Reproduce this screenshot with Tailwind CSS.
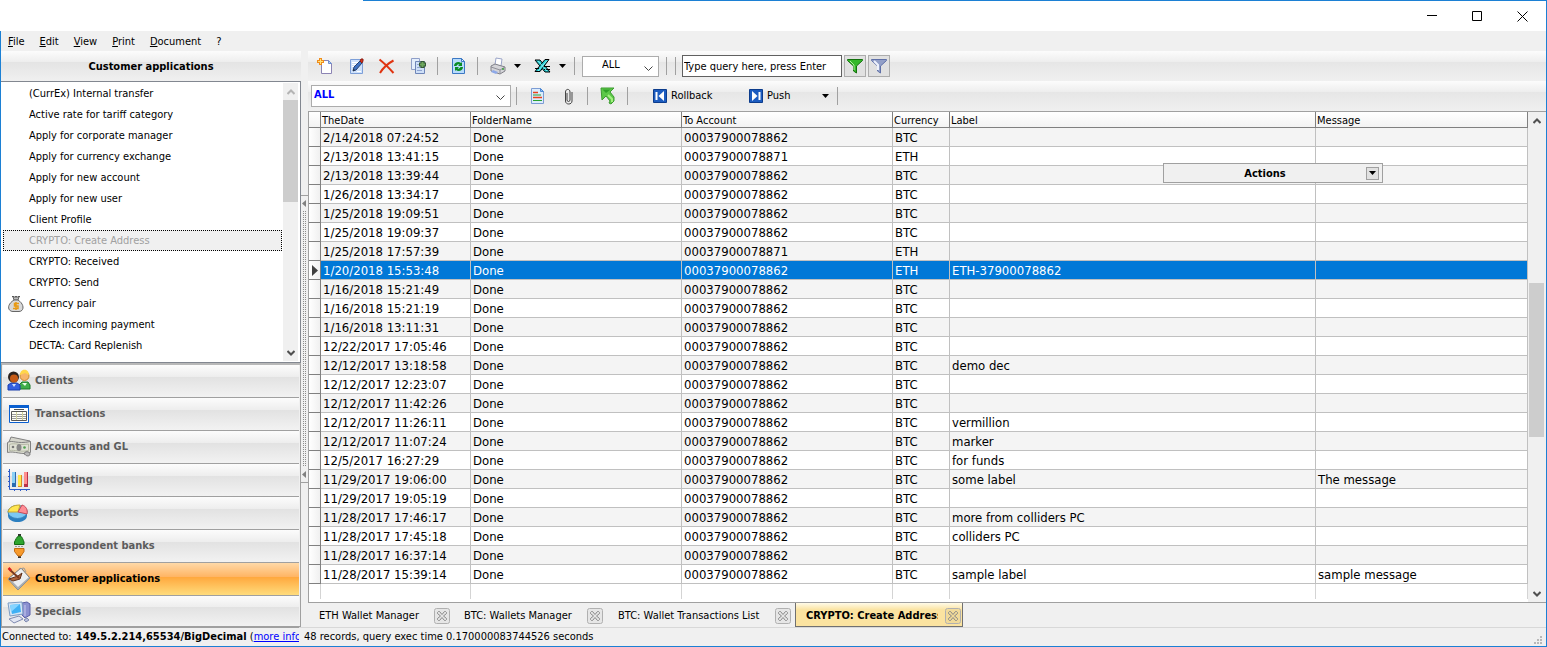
<!DOCTYPE html>
<html lang="en">
<head>
  <meta charset="UTF-8">
  <meta name="viewport" content="width=device-width, initial-scale=1.0">
  <title>Customer applications</title>
  <script src="https://cdn.jsdelivr.net/npm/@tailwindcss/browser@4"></script>
</head>
<body class="bg-white text-black text-[11px] leading-4 font-['DejaVu_Sans_Condensed','Noto_Sans',sans-serif]">
<div class="h-screen flex flex-col border-r border-b border-[#1c80d4] overflow-hidden">

  <!-- title bar -->
  <header class="flex h-[31px] shrink-0">
    <div class="w-[363px]"></div>
    <div class="flex-1 flex justify-end border-t border-[#1c80d4]">
      <button aria-label="Minimize" class="w-[46px] grid place-items-center"><svg width="10" height="10" stroke="#000" fill="none"><path d="M0 4.5h10"/></svg></button>
      <button aria-label="Maximize" class="w-11 grid place-items-center"><svg width="10" height="10" stroke="#000" fill="none"><path d="M.5.5h9v9h-9z"/></svg></button>
      <button aria-label="Close" class="w-[47px] grid place-items-center"><svg width="11" height="11" stroke="#000" fill="none"><path d="M.5.5l10 10M10.5.5l-10 10"/></svg></button>
    </div>
  </header>

  <div class="flex-1 min-h-0 flex flex-col border-l border-[#1c80d4] bg-[#f0f0f0]">
    <nav class="flex h-5 shrink-0 items-center gap-[15px] pl-[7px] pt-[2px]">
      <button><u>F</u>ile</button>
      <button><u>E</u>dit</button>
      <button><u>V</u>iew</button>
      <button><u>P</u>rint</button>
      <button><u>D</u>ocument</button>
      <button>?</button>
    </nav>

    <div class="flex-1 min-h-0 flex">
      <!-- left panel -->
      <aside class="w-[300px] shrink-0 flex flex-col">
        <h1 class="h-[30px] shrink-0 flex items-center justify-center pt-[2px] font-bold bg-[linear-gradient(#fcfcfc,#ededed_38%,#e4e4e4_38%,#f0f0f0)]">Customer applications</h1>
        <div class="flex-1 min-h-0 flex border border-l-0 border-[#828790] bg-white p-px">
          <ul id="appList" class="flex-1 overflow-hidden"></ul>
          <div class="w-[15px] mr-px flex flex-col bg-[#f0f0f0]">
            <button aria-label="Scroll up" class="h-[17px] grid place-items-center"><svg width="8" height="6" fill="none" stroke="#b4b4b4" stroke-width="2"><path d="M.5 5L4 1.5 7.5 5"/></svg></button>
            <div class="h-[102px] bg-[#cdcdcd]"></div>
            <button aria-label="Scroll down" class="mt-auto h-[17px] grid place-items-center"><svg width="8" height="6" fill="none" stroke="#505050" stroke-width="2"><path d="M.5 1L4 4.500 7.500 1"/></svg></button>
          </div>
        </div>
        <div id="sections" class="shrink-0 flex flex-col border border-t-2 border-[#a0a0a0] border-t-[#b8b8b8] px-px">
          <button class="h-[33px] flex items-center gap-1 pl-1 font-bold text-[#5c5c5c] border-b border-[#a0a0a0] bg-[linear-gradient(#fcfcfc,#ededed_38%,#e2e2e2_38%,#f2f2f2)]">
            <svg width="24" height="24" viewBox="0 0 24 24"><path d="M12 20v-4l3-3h6l2 3v4z" fill="#3fae49" stroke="#1c7a2a"/><path d="M15 14l3 3 2-3z" fill="#e8ffe8"/><circle cx="17.500" cy="7" r="4.500" fill="#f6b56a" stroke="#c98a30"/><path d="M13 6c0-7 9-7 9 0l-4-2z" fill="#ffd64a"/><path d="M1 21v-5l3-2h6l3 2v5z" fill="#3560e0" stroke="#1b3fae"/><path d="M5 15l2 3 2-3z" fill="#cfe0ff"/><circle cx="6.500" cy="8" r="5.500" fill="#2c2320"/><ellipse cx="7" cy="9.500" rx="4" ry="4" fill="#c65a16"/></svg>Clients</button>
          <button class="h-[33px] flex items-center gap-1 pl-1 font-bold text-[#5c5c5c] border-b border-[#a0a0a0] bg-[linear-gradient(#fcfcfc,#ededed_38%,#e2e2e2_38%,#f2f2f2)]">
            <svg width="24" height="24" viewBox="0 0 24 24"><path d="M2.500 3.500h19v17h-19z" fill="#fff" stroke="#0a5fd0"/><path d="M2 3h20v3H2z" fill="#0a5fd0"/><path d="M7 7.500h10" stroke="#555"/><path d="M4.500 9.500h15v9h-15z" fill="#fffff4" stroke="#555"/><path d="M5 12.500h14M5 14.500h14M5 16.500h14" stroke="#999"/><path d="M9.500 10v8M15.500 10v8" stroke="#d0d09a"/></svg>Transactions</button>
          <button class="h-[33px] flex items-center gap-1 pl-1 font-bold text-[#5c5c5c] border-b border-[#a0a0a0] bg-[linear-gradient(#fcfcfc,#ededed_38%,#e2e2e2_38%,#f2f2f2)]">
            <svg width="24" height="24" viewBox="0 0 24 24"><path d="M2 7l2-5 19 4v5z" fill="#d5d5cc" stroke="#808080"/><path d="M.500 7.500c5-3 9 2 23-1v11c-9 3-16-2-23 0z" fill="#dfe0d4" stroke="#808080"/><path d="M2.500 9.500c5-2 9 1 19-.500v6.500c-8 2-14-1-19 0z" fill="none" stroke="#b4b8a4"/><ellipse cx="12" cy="12.500" rx="2.500" ry="3.500" fill="#888"/><circle cx="6" cy="12" r="1.300" fill="#777"/><circle cx="17.500" cy="12.500" r="1.300" fill="#4fa04f"/><path d="M17 19c0-3 6-3 6 0s-5 2-5 0z" fill="#bbb" stroke="#777"/></svg>Accounts and GL</button>
          <button class="h-[33px] flex items-center gap-1 pl-1 font-bold text-[#5c5c5c] border-b border-[#a0a0a0] bg-[linear-gradient(#fcfcfc,#ededed_38%,#e2e2e2_38%,#f2f2f2)]">
            <svg width="24" height="24" viewBox="0 0 24 24"><path d="M2.500 1v20.500H23" stroke="#2d5cc8" fill="none"/><path d="M1 3.500h1M1 8.500h1M1 13.500h1M1 18.500h1M7.500 22v1M13.500 22v1M19.500 22v1" stroke="#2d5cc8"/><path d="M5 4h4v15H5z" fill="#8cd0f4"/><path d="M8 4h1v15H5v-4h3z" fill="#2a6bb0"/><path d="M11 7h4v12h-4z" fill="#ffe84a"/><path d="M14 7h1v12h-4v-1h3z" fill="#d88a2a"/><path d="M17 4h4v15h-4z" fill="#ff8f8f"/><path d="M20 4h1v15h-4v-3h3z" fill="#b8324a"/></svg>Budgeting</button>
          <button class="h-[33px] flex items-center gap-1 pl-1 font-bold text-[#5c5c5c] border-b border-[#a0a0a0] bg-[linear-gradient(#fcfcfc,#ededed_38%,#e2e2e2_38%,#f2f2f2)]">
            <svg width="24" height="24" viewBox="0 0 24 24"><path d="M1 11v4c1 8 18 8 19 0v-4z" fill="#2c7fc0"/><ellipse cx="10.500" cy="11" rx="9.500" ry="6.500" fill="#7cc8f4" stroke="#3b86bd"/><path d="M11 11L1 11C2 6 7 4 13 4z" fill="#ffe650" stroke="#c8a830"/><path d="M11 11l4-7c4 1 6 5 5 9z" fill="#ff8c94" stroke="#c24a58"/></svg>Reports</button>
          <button class="h-[33px] flex items-center gap-1 pl-1 font-bold text-[#5c5c5c] border-b border-[#a0a0a0] bg-[linear-gradient(#fcfcfc,#ededed_38%,#e2e2e2_38%,#f2f2f2)]">
            <svg width="24" height="24" viewBox="0 0 24 24"><path d="M11 0h3v3h-3zM11 21h3v3h-3z" fill="#333"/><path d="M7.500 10.500V8c1-2 2-5 4-6h2c2 1 2.500 4 3.500 6v2.500z" fill="#2fa52f" stroke="#126a12"/><path d="M8 12.500h9" stroke="#999" stroke-dasharray="2 1"/><path d="M7.500 14.500h9.500v3l-3 4.500h-3l-3.500-4.500z" fill="#f79a2c" stroke="#c26a10"/></svg>Correspondent banks</button>
          <button class="h-[33px] flex items-center gap-1 pl-1 font-bold text-black border-b border-[#a0a0a0] bg-[linear-gradient(#ffd9a8,#ffb564_43%,#ffa73c_43%,#ffdc7c)]">
            <svg width="24" height="24" viewBox="0 0 24 24"><path d="M1 12L14 1l9 10-12 12z" fill="#eceef0" stroke="#707478"/><path d="M1 12l10 11 12-12-1-1-11 10L2 11z" fill="#a8adb2"/><path d="M2 12l9-3 4-3-2 6-7 2z" fill="#b0643c" stroke="#60301a"/><path d="M3 3l9 8" stroke="#7a3a20" stroke-width="2"/><path d="M1.500 1l2.500 2.500" stroke="#d82020" stroke-width="2.500"/><path d="M12 2l5-1 2 4" fill="none" stroke="#999"/></svg>Customer applications</button>
          <button class="h-[30px] flex items-center gap-1 pl-1 pt-[2px] font-bold text-[#5c5c5c] bg-[linear-gradient(#fcfcfc,#ededed_38%,#e2e2e2_38%,#f2f2f2)]">
            <svg width="24" height="24" viewBox="0 0 24 24"><path d="M15 3l5-1 3 2v11l-5 3-3-3z" fill="#8b90d0" stroke="#5b60a8"/><path d="M18 5v11" stroke="#c8ccf0"/><path d="M1 3l14-1 1 12-13 2z" fill="#d7e6f6" stroke="#7b9cc4"/><path d="M3 5l10-1 1 8-9 2z" fill="#3fb0f4"/><path d="M3 5l10-1-9 8z" fill="#86d4ff"/><path d="M2 19l10-3 4 3-9 4z" fill="#e2e6f2" stroke="#7f8ab0"/><path d="M17 20l3-2 2 2-3 2z" fill="#b8c0dc" stroke="#7f8ab0"/></svg>Specials</button>
        </div>
      </aside>

      <!-- splitter -->
      <div class="w-[7px] shrink-0 flex flex-col items-center justify-center">
        <div class="w-full h-[288px] flex flex-col border-y border-[#a0a0a0]">
          <svg class="my-1" width="6" height="7"><path d="M5 0v7L1 3.500z" fill="#808080"/></svg>
          <svg class="flex-1 mx-auto" width="4"><defs><pattern id="dots" width="2" height="2" patternUnits="userSpaceOnUse"><path d="M0 0h1v1H0z" fill="#8c8c8c"/></pattern></defs><rect width="4" height="100%" fill="url(#dots)"/></svg>
          <svg class="my-1" width="6" height="7"><path d="M5 0v7L1 3.500z" fill="#808080"/></svg>
        </div>
      </div>

      <!-- right side -->
      <main class="flex-1 min-w-0 flex flex-col">
        <div class="h-[30px] shrink-0 flex items-center pl-2 bg-[linear-gradient(#fcfcfc,#ededed_38%,#e6e6e6_38%,#f0f0f0)]">
          <button aria-label="New" class="w-8"><svg width="18" height="18" viewBox="0 0 18 18"><path d="M5.500 3.500h7l3 3v10h-10z" fill="#fff" stroke="#8c84b4"/><path d="M12.500 3.500v3h3z" fill="#b8d4f8" stroke="#6f8fd0"/><path d="M4.500 1v7M1 4.500h7" stroke="#f08c1c" stroke-width="3"/><path d="M4.500 2v5M2 4.500h5" stroke="#ffe37a"/></svg></button>
          <button aria-label="Edit" class="w-[30px]"><svg width="18" height="18" viewBox="0 0 18 18"><path d="M2.500 2.500h12v14h-12z" fill="#cfe2fb" stroke="#7d9fd8"/><path d="M4 5.500h6M4 7.500h5M4 9.500h4M9 14.500h4" stroke="#fff"/><path d="M5 14l1-4 6-6 2 2-6 7z" fill="#3f74c4" stroke="#27406e"/><path d="M12 4l1-2 2 0 0 2-1 2z" fill="#d8301c" stroke="#8c1c10"/><path d="M5 14l.500-2 1.500 1z" fill="#222"/></svg></button>
          <button aria-label="Delete" class="w-8"><svg width="18" height="18" viewBox="0 0 18 18"><path d="M1.500 2.500C6 6 11 11 15.500 16M15.500 3.500C9 7 5 11 2 16" fill="none" stroke="#e03410" stroke-width="2"/></svg></button>
          <button aria-label="Copy" class="w-6"><svg width="18" height="18" viewBox="0 0 18 18"><path d="M1.500 1.500h8v11h-8z" fill="#e4eefc" stroke="#8f9fc8"/><path d="M5.500 4.500h9v12h-9z" fill="#cfe0f8" stroke="#6f86b8"/><path d="M7 7.500h3M7 10.500h5M7 13.500h5" stroke="#8fa4d0"/><path d="M12.500 4v7M9 7.500h7" stroke="#345834" stroke-width="4"/><path d="M12.500 5v5M10 7.500h5" stroke="#6fa85f" stroke-width="2"/></svg></button>
          <i class="w-px h-[18px] bg-[#a0a0a0] ml-[3px] mr-[13px]"></i>
          <button aria-label="Refresh" class="w-[22px]"><svg width="16" height="18" viewBox="0 0 16 18"><path d="M1.500 1.500h9l3 3v12h-12z" fill="#b8dcfc" stroke="#3c78c4"/><path d="M10.500 1.500v3h3z" fill="#e8f4ff" stroke="#3c78c4"/><path d="M3 9c0-4 5-5 7-3l1-1v4H7l1.500-1.500C7 7 6 8 5.500 9zM12 10c0 4-5 5-7 3l-1 1v-4h4l-1.500 1.500C8 12 9 11 9.500 10z" fill="#0a8c24"/></svg></button>
          <i class="w-px h-[18px] bg-[#a0a0a0] ml-1 mr-3"></i>
          <button aria-label="Print" class="w-6"><svg width="17" height="18" viewBox="0 0 17 18"><path d="M5 8l1-7 6 1-1 7z" fill="#fff" stroke="#9aa4c8"/><path d="M1 9l4-2 10 3v4l-5 3-9-3z" fill="#d4d4d8" stroke="#808088"/><path d="M1 10l9 3 5-3M10 13v4" fill="none" stroke="#909098"/><path d="M3 13l5 2-2 2-5-2z" fill="#8da8e8"/><circle cx="13" cy="12" r="1" fill="#3aa03a"/></svg></button>
          <button aria-label="Print options" class="w-5"><svg width="7" height="4"><path d="M0 0h7L3.500 4z"/></svg></button>
          <button aria-label="Export to Excel" class="w-[22px]"><svg width="17" height="18" viewBox="0 0 17 18"><path d="M1 3h5l10 12h-5z" fill="#20c8d0" stroke="#000"/><path d="M15 2.500h-4L1 14.500h5z" fill="#20c8d0" stroke="#000"/><path d="M10 9.500h6M10 12.500h6M1 11.500h4" stroke="#000"/><path d="M4 4l9 10M13 3.500L4 14" stroke="#8cf0f0"/></svg></button>
          <button aria-label="Export options" class="w-3"><svg class="mx-auto" width="7" height="4"><path d="M0 0h7L3.500 4z"/></svg></button>
          <i class="w-px h-[18px] bg-[#a0a0a0] ml-[6px] mr-[7px]"></i>
          <div class="relative">
            <select aria-label="Filter" class="appearance-none w-[77px] h-[21px] pb-[3px] pl-[19px] border border-[#acacac] bg-white"><option>ALL</option></select>
            <svg class="absolute right-[6px] top-[10px] pointer-events-none" width="9" height="6" fill="none" stroke="#444"><path d="M.500.500l4 4 4-4"/></svg>
          </div>
          <i class="w-px h-[18px] bg-[#a0a0a0] ml-[7px] mr-2"></i>
          <i class="w-px h-[18px] bg-[#a0a0a0] mr-[6px]"></i>
          <input aria-label="Query" value="Type query here, press Enter" class="w-40 h-[22px] px-px border border-[#606060] bg-white">
          <button aria-label="Apply filter" class="ml-[2px] w-[22px] h-[22px] grid place-items-center border border-[#adadad] bg-[#e1e1e1]"><svg width="16" height="16" viewBox="0 0 16 16"><path d="M.500 1.500h15v1L9.500 8v7L6.500 13V8l-6-5.500z" fill="#35b82a" stroke="#12700c"/><path d="M3 3l4 4v5" fill="none" stroke="#b4f0a0"/></svg></button>
          <button aria-label="Clear filter" class="ml-[2px] w-[22px] h-[22px] grid place-items-center border border-[#adadad] bg-[#e1e1e1]"><svg width="16" height="16" viewBox="0 0 16 16"><path d="M.500 1.500h15v1L9.500 8v7L6.500 13V8l-6-5.500z" fill="#93a0c8" stroke="#5f70a8"/><path d="M3 3l4 4v5" fill="none" stroke="#eef2fc" stroke-width="2"/></svg></button>
        </div>

        <div class="h-[30px] shrink-0 flex items-center pl-[3px] bg-[linear-gradient(#fcfcfc,#ededed_38%,#e6e6e6_38%,#f0f0f0)]">
          <div class="relative">
            <select aria-label="Folder" class="appearance-none w-[200px] h-[22px] pb-[3px] pl-[2px] border border-[#acacac] bg-white font-bold text-[#0000ff]"><option>ALL</option></select>
            <svg class="absolute right-[6px] top-[10px] pointer-events-none" width="9" height="6" fill="none" stroke="#444"><path d="M.500.500l4 4 4-4"/></svg>
          </div>
          <i class="w-px h-[18px] bg-[#a0a0a0] ml-[5px] mr-3"></i>
          <button aria-label="Document text" class="w-7"><svg width="16" height="18" viewBox="0 0 16 18"><path d="M2.500 1.500h9l3 3v12h-12z" fill="#dcecfc" stroke="#7c9cd4"/><path d="M11.500 1.500v3h3z" fill="#8cc0f8" stroke="#4c88d4"/><path d="M4 5.500h5M4 10.500h9" stroke="#e8421c" stroke-width="1.500"/><path d="M4 8h8M4 13.500h9" stroke="#28a030"/></svg></button>
          <button aria-label="Attachment" class="w-[22px]"><svg class="mx-auto" width="9" height="17" viewBox="0 0 9 17" fill="none" stroke="#444"><path d="M3 5v7c0 2 3 2 3 0V4C6 .500 1.500.500 1.500 4v9c0 4 6.500 4 6.500 0V4"/></svg></button>
          <i class="w-px h-[18px] bg-[#a0a0a0] ml-2 mr-3"></i>
          <button aria-label="Go to parent" class="w-[22px]"><svg width="16" height="18" viewBox="0 0 16 18"><path d="M1 1h13l-4 4 4 5v4l-3 3-2-1 1-2-4-5-4 4z" fill="#5cc848" stroke="#3c9c30"/><path d="M2.500 2.500h8L6 6z" fill="#2fa028"/><path d="M8 8l4 4v3" fill="none" stroke="#a4f080" stroke-width="2"/></svg></button>
          <i class="w-px h-[18px] bg-[#a0a0a0] ml-[5px] mr-6"></i>
          <button class="w-24 flex items-center gap-[3px]"><svg width="16" height="16" viewBox="0 0 16 16"><path d="M1.500 1.500h13v13h-13z" fill="#1c5cc0" stroke="#0c3c8c"/><path d="M4.500 4v8" stroke="#fff" stroke-width="2"/><path d="M12 3v10L6.500 8z" fill="#fff"/></svg>Rollback</button>
          <button class="w-[74px] flex items-center gap-[3px]"><svg width="16" height="16" viewBox="0 0 16 16"><path d="M1.500 1.500h13v13h-13z" fill="#1c5cc0" stroke="#0c3c8c"/><path d="M11.500 4v8" stroke="#fff" stroke-width="2"/><path d="M4 3v10l5.500-5z" fill="#fff"/></svg>Push</button>
          <button aria-label="Push options" class="w-[7px]"><svg width="7" height="4"><path d="M0 0h7L3.500 4z"/></svg></button>
          <i class="w-px h-[18px] bg-[#a0a0a0] ml-2"></i>
        </div>

        <!-- grid -->
        <section class="relative flex-1 min-h-0 flex border-t border-l border-b border-[#a0a0a0] bg-white">
          <div class="flex-1 overflow-hidden">
            <table class="w-full table-fixed border-separate border-spacing-0 text-left">
              <colgroup>
                <col class="w-3"><col class="w-[150px]"><col class="w-[211px]"><col class="w-[211px]"><col class="w-[57px]"><col><col class="w-[212px]">
              </colgroup>
              <thead>
                <tr class="h-4 bg-[linear-gradient(#fff,#f2f2f2)]">
                  <th class="p-0 border-r border-b border-[#808080]"></th>
                  <th class="p-0 pl-px pt-[2px] leading-[13px] font-normal border-r border-b border-[#808080]">TheDate</th>
                  <th class="p-0 pl-px pt-[2px] leading-[13px] font-normal border-r border-b border-[#808080]">FolderName</th>
                  <th class="p-0 pl-px pt-[2px] leading-[13px] font-normal border-r border-b border-[#808080]">To Account</th>
                  <th class="p-0 pl-px pt-[2px] leading-[13px] font-normal border-r border-b border-[#808080]">Currency</th>
                  <th class="p-0 pl-px pt-[2px] leading-[13px] font-normal border-r border-b border-[#808080]">Label</th>
                  <th class="p-0 pl-px pt-[2px] leading-[13px] font-normal border-r border-b border-[#808080]">Message</th>
                </tr>
              </thead>
              <tbody id="records" class="text-[13px]"></tbody>
            </table>
          </div>
          <div class="w-[18px] pl-px pr-[2px] flex flex-col bg-[#f0f0f0]">
            <button aria-label="Scroll up" class="h-[17px] grid place-items-center"><svg width="8" height="6" fill="none" stroke="#505050" stroke-width="2"><path d="M.500 5L4 1.500 7.500 5"/></svg></button>
            <div class="h-[154px] mt-[154px] bg-[#cdcdcd]"></div>
            <button aria-label="Scroll down" class="mt-auto h-[17px] grid place-items-center"><svg width="8" height="6" fill="none" stroke="#505050" stroke-width="2"><path d="M.500 1L4 4.500 7.500 1"/></svg></button>
          </div>
          <!-- floating actions bar -->
          <div class="absolute right-[163px] top-[51px] w-[220px] h-5 flex items-center border border-[#a0a0a0] bg-[#f0f0f0] font-bold">
            <span class="flex-1 pl-3 pt-px text-center">Actions</span>
            <button aria-label="Show actions" class="w-[13px] h-[13px] mr-[3px] ml-3 grid place-items-center border border-[#a0a0a0] bg-[#e1e1e1]"><svg width="7" height="4"><path d="M0 0h7L3.500 4z"/></svg></button>
          </div>
        </section>

        <!-- open documents -->
        <div class="h-6 shrink-0 flex items-start pl-[2px]">
          <div class="w-[146px] h-[23px] pl-[9px] pt-[2px] flex items-center"><button>ETH Wallet Manager</button>
            <button aria-label="Close tab" class="closeTab ml-auto mr-[6px]"></button></div>
          <div class="w-[153px] h-[23px] pl-2 pt-[2px] flex items-center"><button>BTC: Wallets Manager</button>
            <button aria-label="Close tab" class="closeTab ml-auto mr-[6px]"></button></div>
          <div class="w-[186px] h-[23px] pl-[9px] pt-[2px] flex items-center"><button>BTC: Wallet Transactions List</button>
            <button aria-label="Close tab" class="closeTab ml-auto mr-1"></button></div>
          <div class="w-[168px] h-6 pl-[10px] pr-px pt-[2px] flex items-center border border-t-0 border-[#707070] bg-[linear-gradient(#fffbe8,#fbe3a0_30%,#fbe3a0)] font-bold"><button class="w-[132px] overflow-hidden whitespace-nowrap text-left">CRYPTO: Create Address</button>
            <button aria-label="Close tab" class="closeTab ml-auto"></button></div>
        </div>
      </main>
    </div>

    <footer class="h-[19px] shrink-0 flex items-center">
      <div class="w-[298px] h-full pl-px pt-px overflow-hidden whitespace-nowrap border-t border-[#a0a0a0]">Connected to: <b class="ml-px">149.5.2.214,65534/BigDecimal</b> (<a href="#" class="text-[#0000ff] underline">more info</a>)</div>
      <div class="flex-1 h-full pl-[5px] pt-px border-t border-[#d8d8d8]">48 records, query exec time 0.170000083744526 seconds</div>
      <div class="w-3 h-full flex items-end pb-[2px] border-t border-[#d8d8d8]">
        <svg width="8" height="8" fill="#b8b8b8"><path d="M6 0h2v2H6zM3 3h2v2H3zM6 3h2v2H6zM0 6h2v2H0zM3 6h2v2H3zM6 6h2v2H6z"/></svg>
      </div>
    </footer>
  </div>
</div>

<script>
  const apps = ['(CurrEx) Internal transfer', 'Active rate for tariff category', 'Apply for corporate manager', 'Apply for currency exchange',
    'Apply for new account', 'Apply for new user', 'Client Profile', 'CRYPTO: Create Address', 'CRYPTO: Received', 'CRYPTO: Send',
    'Currency pair', 'Czech incoming payment', 'DECTA: Card Replenish'];
  const moneyBag = '<svg width="16" height="16" viewBox="0 0 16 16"><path d="M4 .500h8" stroke="#555" stroke-dasharray="2 1"/><path d="M6 4L5 1h6l-1 3z" fill="#bbb" stroke="#666"/><path d="M6 4C-2 9 0 15.500 5 15.500h6c5 0 6-7-1-11.500z" fill="#d8d8d8" stroke="#666"/><path d="M11 7.500H6.500v2.500h3.500v2.500H5M8 6v8" fill="none" stroke="#e89a14" stroke-width="1.500"/></svg>';

  document.getElementById('appList').innerHTML = apps.map(name => {
    const selected = name === 'CRYPTO: Create Address';
    const look = selected ? 'border-black bg-[#f0f0f0] text-[#a0a0a0]' : 'border-transparent';
    return `<li class="h-[21px] flex items-center border border-dotted ml-px mr-px pt-px ${look}">
      <span class="w-[25px] pl-1">${name === 'Currency pair' ? moneyBag : ''}</span>${name}</li>`;
  }).join('');

  // date, account, currency, label, message
  const records = [
    ['2/14/2018 07:24:52', '00037900078862', 'BTC', '', ''],
    ['2/13/2018 13:41:15', '00037900078871', 'ETH', '', ''],
    ['2/13/2018 13:39:44', '00037900078862', 'BTC', '', ''],
    ['1/26/2018 13:34:17', '00037900078862', 'BTC', '', ''],
    ['1/25/2018 19:09:51', '00037900078862', 'BTC', '', ''],
    ['1/25/2018 19:09:37', '00037900078862', 'BTC', '', ''],
    ['1/25/2018 17:57:39', '00037900078871', 'ETH', '', ''],
    ['1/20/2018 15:53:48', '00037900078862', 'ETH', 'ETH-37900078862', ''],
    ['1/16/2018 15:21:49', '00037900078862', 'BTC', '', ''],
    ['1/16/2018 15:21:19', '00037900078862', 'BTC', '', ''],
    ['1/16/2018 13:11:31', '00037900078862', 'BTC', '', ''],
    ['12/22/2017 17:05:46', '00037900078862', 'BTC', '', ''],
    ['12/12/2017 13:18:58', '00037900078862', 'BTC', 'demo dec', ''],
    ['12/12/2017 12:23:07', '00037900078862', 'BTC', '', ''],
    ['12/12/2017 11:42:26', '00037900078862', 'BTC', '', ''],
    ['12/12/2017 11:26:11', '00037900078862', 'BTC', 'vermillion', ''],
    ['12/12/2017 11:07:24', '00037900078862', 'BTC', 'marker', ''],
    ['12/5/2017 16:27:29', '00037900078862', 'BTC', 'for funds', ''],
    ['11/29/2017 19:06:00', '00037900078862', 'BTC', 'some label', 'The message'],
    ['11/29/2017 19:05:19', '00037900078862', 'BTC', '', ''],
    ['11/28/2017 17:46:17', '00037900078862', 'BTC', 'more from colliders PC', ''],
    ['11/28/2017 17:45:18', '00037900078862', 'BTC', 'colliders PC', ''],
    ['11/28/2017 16:37:14', '00037900078862', 'BTC', '', ''],
    ['11/28/2017 15:39:14', '00037900078862', 'BTC', 'sample label', 'sample message'],
  ];
  const current = 7;
  const rows = records.map(([date, account, currency, label, message], i) => {
    let look = i % 2 ? 'bg-white' : 'bg-[#f4f4f4]';
    if (i === current) look = 'bg-[#0078d7] text-white';
    const marker = i === current ? '<svg class="ml-[3px]" width="6" height="11"><path d="M0 0v11l6-5.500z" fill="#404040"/></svg>' : '';
    const cells = [date, 'Done', account, currency, label, message]
      .map(text => `<td class="p-0 pl-[2px] pt-[2px] leading-4 whitespace-nowrap border-r border-b border-[#c0c0c0]">${text}</td>`).join('');
    return `<tr class="h-[19px] ${look}"><td class="p-0 border-r border-b border-[#808080] bg-[linear-gradient(90deg,#fff,#f0f0f0)]">${marker}</td>${cells}</tr>`;
  });
  const tail = '<td class="p-0 border-r border-[#d4d4d4]"></td>'.repeat(7);
  document.getElementById('records').innerHTML = rows.join('') + `<tr class="h-[15px]">${tail}</tr>`;

  document.querySelectorAll('.closeTab').forEach(button => {
    button.innerHTML = '<svg width="16" height="16" viewBox="0 0 16 16" fill="none"><rect x=".500" y=".500" width="15" height="15" rx="2" fill="#000" fill-opacity=".04" stroke="#b0b0b0"/><path d="M3.500 4.500l1-1h1l2.500 3 2.500-3h1l1 1v1l-3 2.500 3 2.500v1l-1 1h-1l-2.500-3-2.500 3h-1l-1-1v-1l3-2.500-3-2.500z" stroke="#888"/></svg>';
  });
</script>
</body>
</html>
